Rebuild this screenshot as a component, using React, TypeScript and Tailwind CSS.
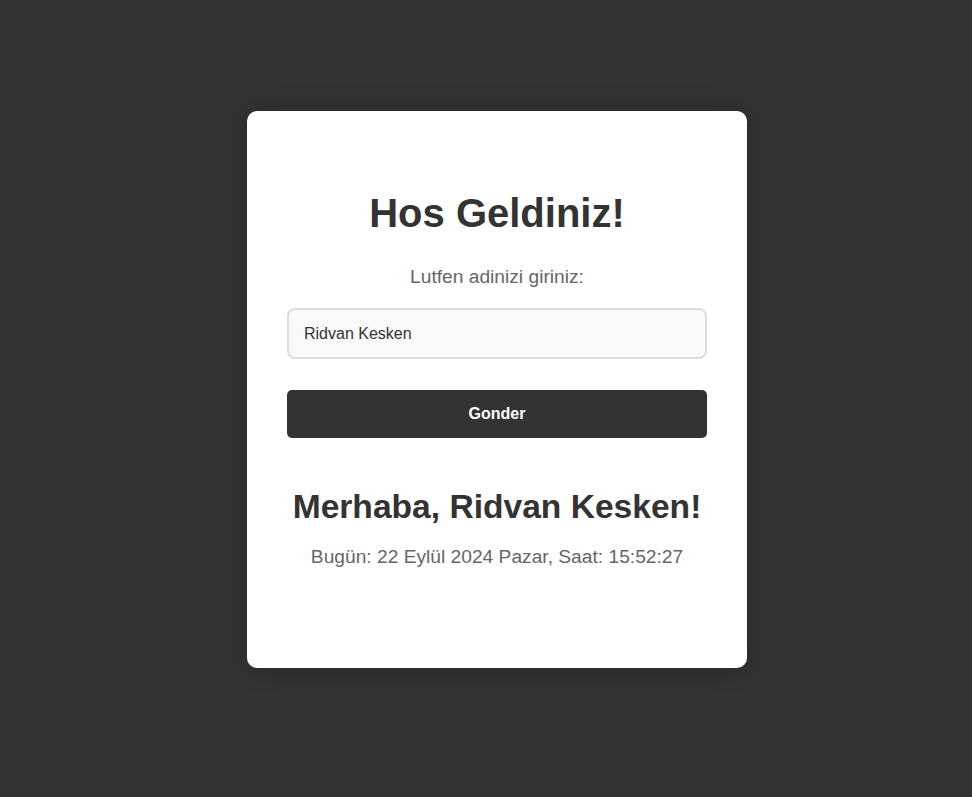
import React, { useState } from 'react';

export default function App() {
  const [name, setName] = useState('Ridvan Kesken');

  return (
    <div
      className="min-h-screen w-full bg-[#333333] pt-[111px] pl-[247px]"
      style={{ fontFamily: '"Liberation Sans", Arial, sans-serif' }}
    >
      {/* Card */}
      <div className="w-[500px] h-[557px] rounded-[10px] bg-white px-[40px] pt-[80px] text-center shadow-[0_0_25px_rgba(0,0,0,0.25)]">
        <h1 className="text-[40px] leading-[44px] font-bold text-[#333333]">Hos Geldiniz!</h1>
        <p className="mt-[31px] text-[19.2px] leading-[22px] text-[#666666]">Lutfen adinizi giriniz:</p>

        <input
          type="text"
          value={name}
          onChange={(e) => setName(e.target.value)}
          className="mt-[20px] block w-full h-[51px] rounded-[8px] border-2 border-[#dddddd] bg-[#f9f9f9] px-[15px] text-[16px] text-[#333333] outline-none"
        />

        <button
          type="button"
          className="mt-[31px] block w-full h-[48px] rounded-[5px] bg-[#333333] text-[16px] font-bold text-white"
        >
          Gonder
        </button>

        {/* Greeting */}
        <h2 className="mt-[49px] text-[33.6px] leading-[39px] font-bold text-[#333333]">Merhaba, Ridvan Kesken!</h2>
        <p className="mt-[20px] text-[19.2px] leading-[22px] text-[#666666]">
          Bugün: 22 Eylül 2024 Pazar, Saat: 15:52:27
        </p>
      </div>
    </div>
  );
}
